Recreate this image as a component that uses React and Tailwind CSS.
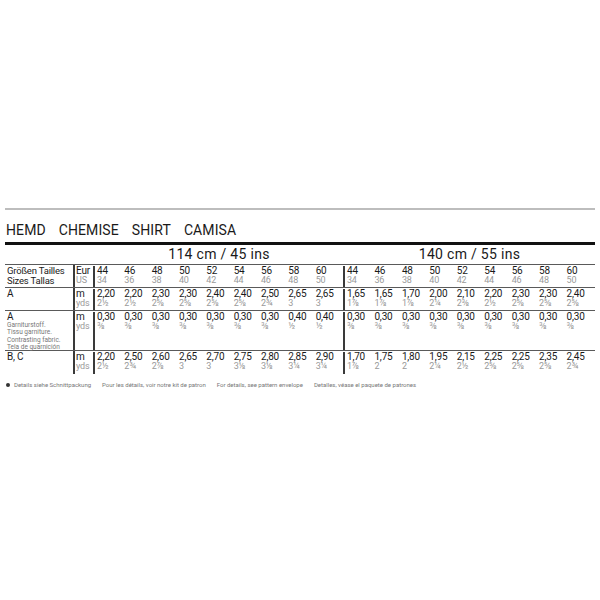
import React from "react";

const sizes = ["44", "46", "48", "50", "52", "54", "56", "58", "60"];
const us = ["34", "36", "38", "40", "42", "44", "46", "48", "50"];

const rows = [
  {
    m1: ["2,20", "2,20", "2,30", "2,30", "2,40", "2,40", "2,50", "2,65", "2,65"],
    y1: ["2½", "2½", "2⅝", "2⅝", "2⅝", "2⅝", "2¾", "3", "3"],
    m2: ["1,65", "1,65", "1,70", "2,00", "2,10", "2,20", "2,30", "2,30", "2,40"],
    y2: ["1⅞", "1⅞", "1⅞", "2¼", "2⅜", "2½", "2⅝", "2⅝", "2⅝"],
  },
  {
    m1: ["0,30", "0,30", "0,30", "0,30", "0,30", "0,30", "0,30", "0,40", "0,40"],
    y1: ["⅜", "⅜", "⅜", "⅜", "⅜", "⅜", "⅜", "½", "½"],
    m2: ["0,30", "0,30", "0,30", "0,30", "0,30", "0,30", "0,30", "0,30", "0,30"],
    y2: ["⅜", "⅜", "⅜", "⅜", "⅜", "⅜", "⅜", "⅜", "⅜"],
  },
  {
    m1: ["2,20", "2,50", "2,60", "2,65", "2,70", "2,75", "2,80", "2,85", "2,90"],
    y1: ["2½", "2¾", "2⅞", "3", "3", "3⅛", "3⅛", "3¼", "3¼"],
    m2: ["1,70", "1,75", "1,80", "1,95", "2,15", "2,25", "2,25", "2,35", "2,45"],
    y2: ["1⅞", "2", "2", "2¼", "2½", "2⅝", "2⅝", "2⅝", "2¾"],
  },
];

function Group({ top, bottom, w }) {
  return (
    <div className={`${w} border-l-2 border-[#3a3a3a] pl-[2px] grid grid-cols-9`}>
      {top.map((t, i) => (
        <div key={i} className="flex flex-col">
          <span className="text-[#1a1a1a] text-[10px] leading-[10px]">{t}</span>
          <span className="text-[#9a9a9a] text-[9px] leading-[9px]">{bottom[i]}</span>
        </div>
      ))}
    </div>
  );
}

function Units({ a, b, pt }) {
  return (
    <div className={`w-[20px] border-l-2 border-[#3a3a3a] pl-[1px] flex flex-col ${pt}`}>
      <span className="text-[#1a1a1a] text-[10px] leading-[10px]">{a}</span>
      <span className="text-[#9a9a9a] text-[9px] leading-[9px]">{b}</span>
    </div>
  );
}

function Row({ h, pt, label, data }) {
  return (
    <div className={`flex ${h} border-t-[1.5px] border-[#5a5a5a] tracking-[-0.2px]`}>
      <div className={`w-[68px] pl-[2px] ${pt} text-[10px] leading-[10px]`}>{label}</div>
      <Units a="m" b="yds" pt={pt} />
      <div className={`flex ${pt}`}>
        <Group top={data[0]} bottom={data[1]} w="w-[250px]" />
        <Group top={data[2]} bottom={data[3]} w="w-[251px]" />
      </div>
    </div>
  );
}

export default function App() {
  return (
    <div
      className="w-[600px] h-[600px] bg-white text-[#1a1a1a] pt-[208px]"
      style={{ fontFamily: "Roboto, 'Liberation Sans', sans-serif" }}
    >
      <div className="mx-[5px]">
        <div className="h-[1.5px] bg-[#bdbdbd]" />
        <div className="h-[32.5px] pt-[12px] pl-[1px] text-[14px] leading-[16px] flex gap-[13px] tracking-[0.1px]">
          <span>HEMD</span>
          <span>CHEMISE</span>
          <span>SHIRT</span>
          <span>CAMISA</span>
        </div>
        <div className="h-[2.5px] bg-[#111]" />
        <div className="flex h-[19px] text-[14px] leading-[19px] tracking-[0.3px]">
          <div className="w-[88px]" />
          <div className="w-[250px] text-center pl-[2px]">114 cm / 45 ins</div>
          <div className="w-[251px] text-center pl-[2px]">140 cm / 55 ins</div>
        </div>
        <div className="flex h-[23px] border-t-[1.5px] border-[#5a5a5a] tracking-[-0.2px]">
          <div className="w-[68px] pl-[2px] flex flex-col pt-[1px] text-[9.5px] leading-[10px]">
            <span>Größen Tailles</span>
            <span>Sizes Tallas</span>
          </div>
          <Units a="Eur" b="US" pt="pt-[1px]" />
          <div className="flex pt-[1px]">
            <Group top={sizes} bottom={us} w="w-[250px]" />
            <Group top={sizes} bottom={us} w="w-[251px]" />
          </div>
        </div>
        <Row
          h="h-[23px]"
          pt="pt-[1.5px]"
          label="A"
          data={[rows[0].m1, rows[0].y1, rows[0].m2, rows[0].y2]}
        />
        <Row
          h="h-[40px]"
          pt="pt-[1px]"
          label={
            <div className="flex flex-col">
              <span>A</span>
              <span className="text-[6.5px] leading-[7.3px] text-[#777] tracking-normal mt-[0.5px]">
                Garniturstoff.
                <br />
                Tissu garniture.
                <br />
                Contrasting fabric.
                <br />
                Tela de guarnición
              </span>
            </div>
          }
          data={[rows[1].m1, rows[1].y1, rows[1].m2, rows[1].y2]}
        />
        <Row
          h="h-[24px]"
          pt="pt-[1.5px]"
          label="B, C"
          data={[rows[2].m1, rows[2].y1, rows[2].m2, rows[2].y2]}
        />
        <div className="flex items-center gap-[11px] mt-[7px] text-[6px] leading-[8px] text-[#777] pl-[1px]">
          <span className="flex items-center gap-[4px]">
            <span className="w-[4px] h-[4px] rounded-full bg-[#333] inline-block" />
            Details siehe Schnittpackung
          </span>
          <span>Pour les détails, voir notre kit de patron</span>
          <span>For details, see pattern envelope</span>
          <span>Detalles, véase el paquete de patrones</span>
        </div>
      </div>
    </div>
  );
}
